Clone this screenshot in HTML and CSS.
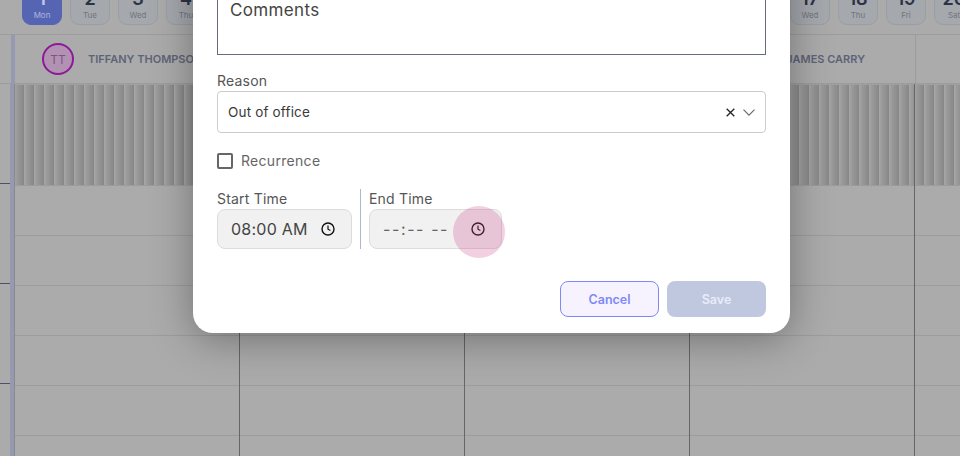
FILE: index.html
```html
<!DOCTYPE html>
<html lang="en">
<head>
<meta charset="utf-8">
<title>Calendar</title>
<link rel="stylesheet" href="styles.css">
</head>
<body>
<div class="app">
  <div class="days">
    <div class="day active"><b>1</b><span>Mon</span></div>
    <div class="day"><b>2</b><span>Tue</span></div>
    <div class="day"><b>3</b><span>Wed</span></div>
    <div class="day"><b>4</b><span>Thu</span></div>
    <div class="day"><b>5</b><span>Fri</span></div>
    <div class="day"><b>6</b><span>Sat</span></div>
    <div class="day"><b>7</b><span>Sun</span></div>
    <div class="day"><b>8</b><span>Mon</span></div>
    <div class="day"><b>9</b><span>Tue</span></div>
    <div class="day"><b>10</b><span>Wed</span></div>
    <div class="day"><b>11</b><span>Thu</span></div>
    <div class="day"><b>12</b><span>Fri</span></div>
    <div class="day"><b>13</b><span>Sat</span></div>
    <div class="day"><b>14</b><span>Sun</span></div>
    <div class="day"><b>15</b><span>Mon</span></div>
    <div class="day"><b>16</b><span>Tue</span></div>
    <div class="day"><b>17</b><span>Wed</span></div>
    <div class="day"><b>18</b><span>Thu</span></div>
    <div class="day"><b>19</b><span>Fri</span></div>
    <div class="day"><b>20</b><span>Sat</span></div>
  </div>
  <div class="heads">
    <div class="head-gutter"></div>
    <div class="head"><span class="avatar">TT</span><span class="name">TIFFANY THOMPSON</span></div>
    <div class="head"></div>
    <div class="head"></div>
    <div class="head james"><span class="name">JAMES CARRY</span></div>
    <div class="head"></div>
  </div>
  <div class="grid">
    <div class="axis">
      <div class="tick"></div>
      <div class="tick"></div>
      <div class="tick"></div>
    </div>
    <div class="col"><div class="stripes"></div><div class="rows"></div></div>
    <div class="col"><div class="stripes"></div><div class="rows"></div></div>
    <div class="col"><div class="stripes"></div><div class="rows"></div></div>
    <div class="col"><div class="stripes"></div><div class="rows"></div></div>
    <div class="col"><div class="stripes"></div><div class="rows"></div></div>
  </div>
</div>

<div class="modal">
  <div class="comments">Comments</div>
  <div class="label reason-label">Reason</div>
  <div class="select">
    <span class="select-value">Out of office</span>
    <svg class="x-icon" width="9" height="9" viewBox="0 0 9 9"><path d="M.7.7l7.6 7.6M8.3.7L.7 8.3" stroke="#222" stroke-width="1.3" fill="none"/></svg>
    <svg class="chev-icon" width="12" height="7" viewBox="0 0 12 7"><path d="M.5.7L6 6.2 11.500.7" stroke="#666" stroke-width="1.1" fill="none"/></svg>
  </div>
  <div class="recurrence"><span class="checkbox"></span><span>Recurrence</span></div>
  <div class="times">
    <div class="time start">
      <div class="label">Start Time</div>
      <div class="time-input"><span class="time-value">08:00 AM</span>
        <svg class="clock" width="14" height="14" viewBox="0 0 14 14"><circle cx="7" cy="7" r="6" stroke="#111" stroke-width="1.4" fill="none"/><path d="M7 3.400V7.200l2.400 1.400" stroke="#111" stroke-width="1.200" fill="none"/></svg>
      </div>
    </div>
    <div class="time end">
      <div class="label">End Time</div>
      <div class="time-input"><span class="time-value muted">--:-- --</span>
        <svg class="clock" width="14" height="14" viewBox="0 0 14 14"><circle cx="7" cy="7" r="6" stroke="#111" stroke-width="1.4" fill="none"/><path d="M7 3.400V7.200l2.400 1.400" stroke="#111" stroke-width="1.200" fill="none"/></svg>
        <span class="ripple"></span>
      </div>
    </div>
  </div>
  <div class="actions">
    <button class="btn cancel">Cancel</button>
    <button class="btn save">Save</button>
  </div>
</div>
</body>
</html>
```
FILE: styles.css
```css
* { box-sizing: border-box; }
html, body { margin: 0; height: 100%; }
body {
  width: 960px; height: 456px; overflow: hidden; position: relative;
  background: #ababab;
  font-family: "Inter", "Noto Sans", sans-serif;
}
.app { width: 960px; height: 456px; overflow: hidden; display: flex; flex-direction: column; }

.days { height: 35px; display: flex; align-items: flex-end; gap: 8px; padding: 0 0 9px 22px; border-bottom: 1px solid #9c9c9c; flex: none; overflow: hidden; }
.day {
  flex: none; width: 40px; height: 42px; border: 1px solid #999ea5; border-radius: 9px;
  background: #a5a8ad; display: flex; flex-direction: column; align-items: center; justify-content: flex-end; padding-bottom: 3px;
  color: #71757c;
}
.day b { font-size: 18px; line-height: 20px; font-weight: 600; color: #2c3345; }
.day span { font-size: 8px; line-height: 11px; margin-top: 1px; }
.day.active { background: #5565b4; border-color: #5565b4; color: #b0b6dc; }
.day.active b { color: #c5c9e8; }

.heads { height: 49px; display: flex; flex: none; border-bottom: 1px solid #9c9c9c; }
.head-gutter { width: 15px; flex: none; margin-right: 1px; border-right: 4px solid #9699b2; }
.head { width: 225px; flex: none; border-right: 1px solid #9c9c9c; display: flex; align-items: center; gap: 14px; padding-left: 26px; }
.head.james { padding-left: 0; justify-content: flex-end; padding-right: 50px; }
.avatar { width: 32px; height: 32px; flex: none; border-radius: 50%; border: 2px solid #8c1a96; background: #b292b2; color: #7e5288; font-size: 12px; display: flex; align-items: center; justify-content: center; }
.name { font-size: 11px; font-weight: 600; color: #5d6477; white-space: nowrap; }

.grid { flex: 1; display: flex; min-height: 0; }
.axis { width: 14px; flex: none; border-right: 4px solid #9699b2; padding-top: 99px; display: flex; flex-direction: column; gap: 99px; }
.tick { height: 1px; background: #4a5068; flex: none; }
.col { width: 225px; flex: none; border-right: 1px solid #666; display: flex; flex-direction: column; }
.axis + .col { width: 226px; border-left: 1px solid #8a8a8a; }
.stripes {
  height: 102px; flex: none; border-top: 1px solid #a0a0a0; border-bottom: 1px solid #9c9c9c;
  background: repeating-linear-gradient(90deg, #a2a2a2 0, #9a9a9a 2px, #8a8a8a 8px, #848484 9px, #a6a6a6 9px, #a6a6a6 10px);
}
.rows { flex: 1; background: repeating-linear-gradient(180deg, transparent 0, transparent 49px, #9c9c9c 49px, #9c9c9c 50px); }

.modal {
  position: absolute; left: 193px; top: -60px; width: 597px; height: 393px; background: #fff; border-radius: 20px;
  box-shadow: 0 6px 42px rgba(0,0,0,.34);
  padding: 60px 24px 16px; display: flex; flex-direction: column; color: #555;
}
.comments { height: 55px; border: 1px solid #666c7c; border-top: 0; padding: 1px 12px 0; font-size: 17px; line-height: 19px; letter-spacing: .35px; color: #444; width: 549px; flex: none; }
.label { font-size: 14px; line-height: 18px; letter-spacing: .2px; color: #555; }
.reason-label { margin-top: 17px; flex: none; }
.select { margin-top: 1px; height: 42px; width: 549px; flex: none; border: 1px solid #ccc; border-radius: 4px; display: flex; align-items: center; padding: 0 10px; font-size: 13.5px; letter-spacing: .17px; color: #3a3a3a; }
.select-value { flex: 1; }
.chev-icon { margin-left: 8px; }
.recurrence { margin-top: 19px; flex: none; display: flex; align-items: center; gap: 8px; font-size: 14px; line-height: 18px; letter-spacing: .3px; color: #666; }
.checkbox { width: 16px; height: 16px; border: 2px solid #666; border-radius: 2px; flex: none; }
.times { margin-top: 19px; flex: none; display: flex; }
.time.start { width: 144px; border-right: 1px solid #b0b6cc; padding-right: 8px; }
.time.end { padding-left: 8px; }
.time .label { padding-top: 1px; }
.time-input { position: relative; width: 135px; height: 40px; margin-top: 1px; background: #f1f1f1; border: 1px solid #dcdcdc; border-radius: 8px; display: flex; align-items: center; justify-content: space-between; padding: 0 16px 0 13px; font-size: 16px; color: #444; }
.time.end .time-input { width: 133px; }
.time-value { letter-spacing: .25px; }
.time-value.muted { color: #666; letter-spacing: 1.6px; }
.ripple { position: absolute; width: 52px; height: 52px; border-radius: 50%; background: rgba(205,70,140,.26); right: -4px; top: -4px; }
.actions { margin-top: 32px; flex: none; display: flex; justify-content: flex-end; gap: 8px; }
.btn { width: 99px; height: 36px; border-radius: 8px; font: 600 12.5px "Inter", sans-serif; padding: 0; }
.cancel { background: #f7f3fe; border: 1px solid #8088f7; color: #8088f7; }
.save { background: #c0c8e0; border: 0; color: #e8ecf8; }
```
